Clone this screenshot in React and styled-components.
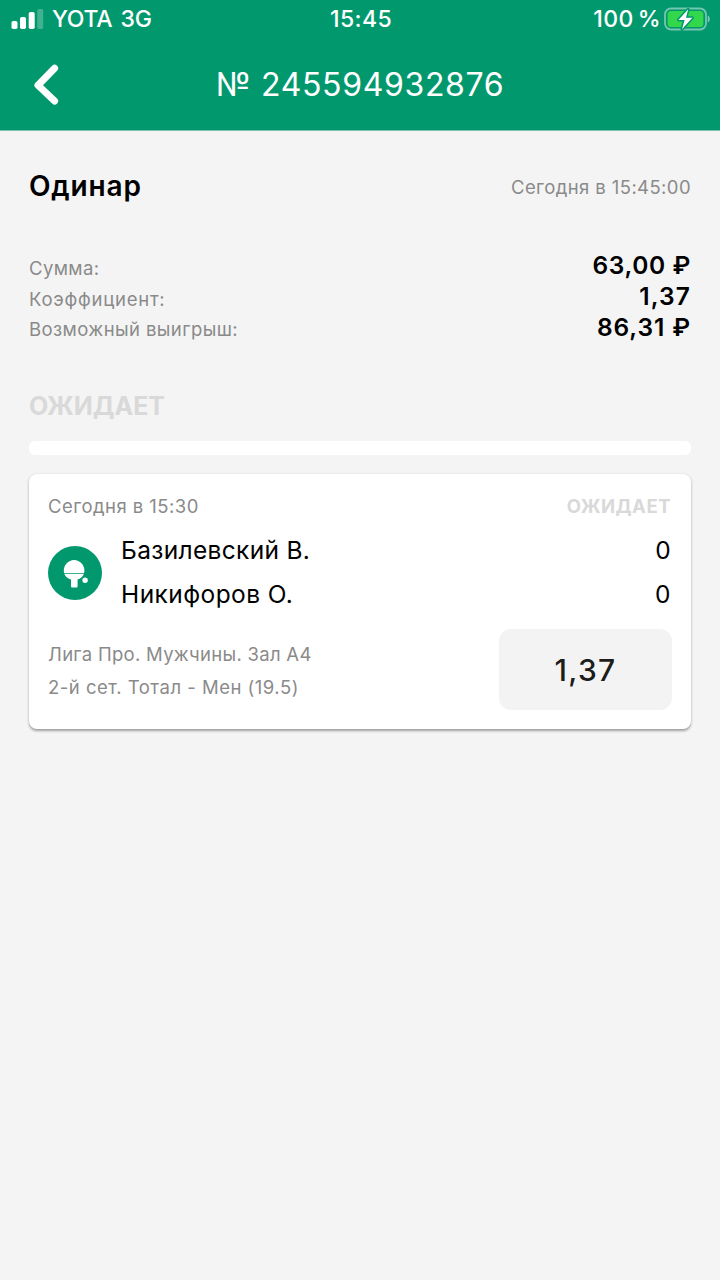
import React from "react";
import styled, { createGlobalStyle } from "styled-components";

const GlobalStyle = createGlobalStyle`
  * {
    box-sizing: border-box;
  }

  body {
    margin: 0;
    background: #f4f4f4;
    font-family: Inter, "Liberation Sans", sans-serif;
    color: #000000;
  }
`;

const Screen = styled.div`
  width: 720px;
  min-height: 1280px;
  background: #f4f4f4;
  white-space: nowrap;
`;

const Header = styled.header`
  height: 130px;
  background: #02986d;
  box-shadow: 0 1px 0 #7cc3ae;
  color: #ffffff;
`;

const StatusBar = styled.div`
  height: 40px;
  padding: 0 9px 2px 11px;
  display: grid;
  grid-template-columns: 1fr auto 1fr;
  align-items: center;
  font-size: 23px;
  font-weight: 450;
  line-height: 38px;
`;

const Carrier = styled.div`
  display: flex;
  align-items: center;
  gap: 8px;
  letter-spacing: -0.3px;
  word-spacing: 2.5px;
`;

const Clock = styled.div`
  letter-spacing: 0.4px;
`;

const Battery = styled.div`
  display: flex;
  align-items: center;
  justify-content: flex-end;
  gap: 3px;
  letter-spacing: 0.4px;
  word-spacing: -2.5px;
`;

const NavBar = styled.div`
  height: 90px;
  padding: 0 33px 1px;
  display: grid;
  grid-template-columns: 60px 1fr 60px;
  align-items: center;
`;

const BackButton = styled.button`
  display: flex;
  padding: 0;
  border: none;
  background: none;
`;

const Title = styled.h1`
  margin: 0;
  text-align: center;
  font-size: 32px;
  font-weight: 400;
  letter-spacing: 0.65px;
`;

const Content = styled.main`
  padding: 36px 29px 0;
`;

const Row = styled.div`
  display: flex;
  align-items: center;
  justify-content: space-between;
`;

const Heading = styled.h2`
  margin: 0;
  font-size: 28px;
  line-height: 40px;
  font-weight: 600;
  letter-spacing: 0.85px;
`;

const Muted = styled.span`
  padding-top: 2px;
  color: #8a8a8a;
  font-size: 18.5px;
  letter-spacing: ${({ spacing = 0.45 }) => spacing}px;
`;

const Summary = styled.div`
  margin-top: 44px;
`;

const SummaryRow = styled(Row)`
  height: 30.7px;

  ${Muted} {
    padding-top: 5px;
  }
`;

const Value = styled.span`
  font-size: 24.5px;
  font-weight: 570;
  letter-spacing: ${({ spacing }) => spacing}px;
`;

const Status = styled.div`
  color: #d9d9d9;
  font-size: ${({ size }) => size}px;
  line-height: 30px;
  font-weight: 700;
  letter-spacing: ${({ spacing }) => spacing}px;
`;

const MainStatus = styled(Status)`
  margin-top: 49px;
`;

const Progress = styled.div`
  height: 14px;
  margin: 20px 0 19px;
  border-radius: 6px;
  background: #ffffff;
`;

const Card = styled.section`
  height: 255px;
  padding: 17px 19px 19px;
  border-radius: 8px;
  background: #ffffff;
  box-shadow: 0 1.5px 2.5px rgba(0, 0, 0, 0.35);
`;

const CardHead = styled(Row)`
  height: 30px;
  padding-right: 1px;

  ${Muted} {
    padding-top: 0;
  }
`;

const Match = styled.div`
  display: flex;
  align-items: center;
  height: 88px;
  margin-top: 8px;
  gap: 19px;
`;

const Players = styled.div`
  flex: 1;
  padding-right: 1px;
`;

const Player = styled(Row)`
  height: 44px;
  padding-bottom: 2px;
  font-size: 24.5px;
  letter-spacing: ${({ spacing }) => spacing}px;
`;

const Bet = styled(Row)`
  margin-top: 12px;
`;

const BetInfo = styled.div`
  display: flex;
  flex-direction: column;
  height: 81px;
  padding-top: 9px;

  ${Muted} {
    padding-top: 0;
    line-height: 33px;
  }
`;

const Odds = styled.div`
  width: 173px;
  height: 81px;
  border-radius: 12px;
  background: #f3f3f3;
  color: #1c1c1c;
  display: flex;
  align-items: center;
  justify-content: center;
  font-size: 30px;
  font-weight: 550;
  letter-spacing: 1.3px;
`;

const SignalIcon = () => (
  <svg width="33" height="20" viewBox="0 0 33 20" fill="#ffffff">
    <rect x="0.5" y="12" width="6" height="8" rx="1.8" />
    <rect x="9" y="8" width="6" height="12" rx="1.8" />
    <rect x="17.7" y="3" width="6" height="17" rx="1.8" />
    <rect x="26.2" y="0" width="6" height="20" rx="1.8" opacity="0.25" />
  </svg>
);

const BatteryIcon = () => (
  <svg width="47" height="24" viewBox="0 0 47 24">
    <rect x="1" y="1.5" width="41" height="21" rx="6" fill="none" stroke="#ffffff" strokeOpacity="0.45" strokeWidth="1.8" />
    <path d="M43.8 8.5c2.6 1 2.6 6 0 7z" fill="#ffffff" opacity="0.5" />
    <rect x="3.6" y="4" width="35.8" height="16" rx="3.6" fill="#32d74b" />
    <path
      d="M24.2 2.2L14.4 12.9h6.2L18 22.2 28.4 10.8H22z"
      fill="#ffffff"
      stroke="#02986d"
      strokeWidth="3"
      strokeLinejoin="round"
      paintOrder="stroke"
    />
  </svg>
);

const BackIcon = () => (
  <svg width="26" height="42" viewBox="0 0 26 42" fill="none">
    <path d="M21.6 4.2L5 21.2 21.6 37" stroke="#ffffff" strokeWidth="7" strokeLinecap="round" strokeLinejoin="round" />
  </svg>
);

const TennisIcon = () => (
  <svg width="54" height="54" viewBox="0 0 54 54">
    <circle cx="27" cy="27" r="27" fill="#02986d" />
    <path
      d="M16.2 27.2a10.3 10.3 0 1 1 19.8 0z M16.4 28.1h19.4c-1 2.9-3.6 4.6-6.2 5.4v6.7q0 1.2-1.2 1.2h-4.2q-1.2 0-1.2-1.2v-6.7c-2.8-.8-5.6-2.5-6.6-5.4z"
      fill="#ffffff"
    />
    <circle cx="37.1" cy="34.3" r="2.7" fill="#ffffff" />
  </svg>
);

const summary = [
  { label: "Сумма:", value: "63,00 ₽", labelSpacing: 0.4, valueSpacing: 0.6 },
  { label: "Коэффициент:", value: "1,37", labelSpacing: 0.75, valueSpacing: 1.1 },
  { label: "Возможный выигрыш:", value: "86,31 ₽", labelSpacing: 0.4, valueSpacing: 0.9 },
];

const players = [
  { name: "Базилевский В.", score: 0, spacing: 0.33 },
  { name: "Никифоров О.", score: 0, spacing: 0.43 },
];

const App = () => {
  return (
    <Screen>
      <GlobalStyle />
      <Header>
        <StatusBar>
          <Carrier>
            <SignalIcon />
            <span>YOTA 3G</span>
          </Carrier>
          <Clock>15:45</Clock>
          <Battery>
            <span>100 %</span>
            <BatteryIcon />
          </Battery>
        </StatusBar>
        <NavBar>
          <BackButton>
            <BackIcon />
          </BackButton>
          <Title>№ 245594932876</Title>
        </NavBar>
      </Header>

      <Content>
        <Row>
          <Heading>Одинар</Heading>
          <Muted spacing={0.4}>Сегодня в 15:45:00</Muted>
        </Row>

        <Summary>
          {summary.map((item) => (
            <SummaryRow key={item.label}>
              <Muted spacing={item.labelSpacing}>{item.label}</Muted>
              <Value spacing={item.valueSpacing}>{item.value}</Value>
            </SummaryRow>
          ))}
        </Summary>

        <MainStatus size={25} spacing={0}>ОЖИДАЕТ</MainStatus>
        <Progress />

        <Card>
          <CardHead>
            <Muted>Сегодня в 15:30</Muted>
            <Status size={18.5} spacing={0.5}>ОЖИДАЕТ</Status>
          </CardHead>

          <Match>
            <TennisIcon />
            <Players>
              {players.map((player) => (
                <Player key={player.name} spacing={player.spacing}>
                  <span>{player.name}</span>
                  <span>{player.score}</span>
                </Player>
              ))}
            </Players>
          </Match>

          <Bet>
            <BetInfo>
              <Muted spacing={0.29}>Лига Про. Мужчины. Зал A4</Muted>
              <Muted spacing={0.5}>2-й сет. Тотал - Мен (19.5)</Muted>
            </BetInfo>
            <Odds>1,37</Odds>
          </Bet>
        </Card>
      </Content>
    </Screen>
  );
};

export default App;
